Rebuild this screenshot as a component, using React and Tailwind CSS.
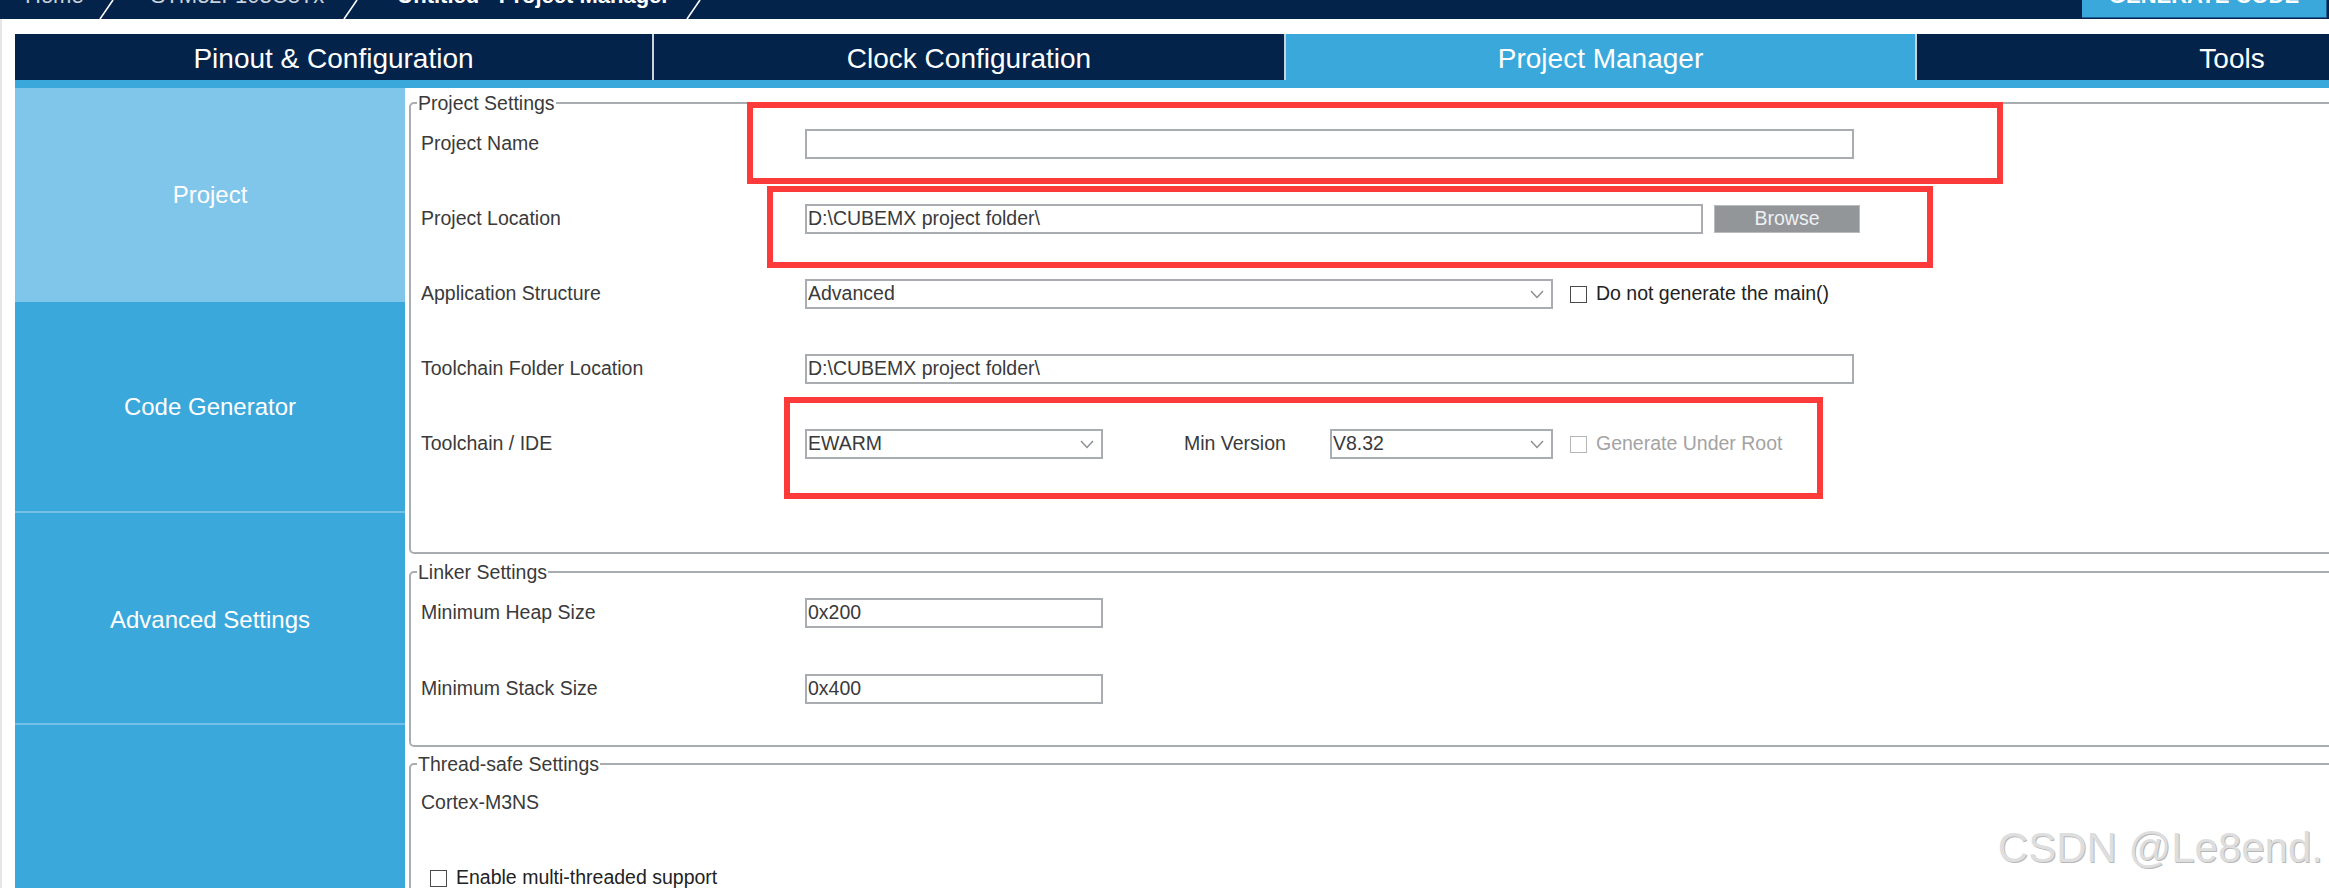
import React from 'react';

const NAVY = 'bg-[#03234b]';

function Chevron() {
  return (
    <svg width="14" height="9" viewBox="0 0 14 9" className="shrink-0">
      <polyline points="1,1 7,7.5 13,1" fill="none" stroke="#8a8d90" strokeWidth="1.4" />
    </svg>
  );
}

function Slash() {
  return (
    <svg width="15" height="19" viewBox="0 0 15 19" className="shrink-0">
      <line x1="1" y1="19" x2="14" y2="0" stroke="#ffffff" strokeWidth="1.6" />
    </svg>
  );
}

function TextBox({ value = '', className = '' }) {
  return (
    <div
      className={`h-[30px] border-2 border-[#a9adb1] bg-white flex items-center pl-[1px] text-[#3a3a3a] ${className}`}
    >
      {value}
    </div>
  );
}

function Select({ value, className = '' }) {
  return (
    <div
      className={`h-[30px] border-2 border-[#a9adb1] bg-white flex items-center justify-between pl-[1px] pr-[7px] text-[#3a3a3a] ${className}`}
    >
      <span>{value}</span>
      <Chevron />
    </div>
  );
}

function Check({ label, disabled }) {
  return (
    <div className="flex items-center">
      <div
        className={`w-[17px] h-[17px] border-[1.5px] bg-white ${
          disabled ? 'border-[#b5b5b5]' : 'border-[#4a4a4a]'
        }`}
      />
      <span className={`ml-[9px] ${disabled ? 'text-[#a3a3a3]' : 'text-[#222]'}`}>{label}</span>
    </div>
  );
}

function Row({ label, children }) {
  return (
    <div className="flex items-center h-[30px]">
      <div className="w-[384px] shrink-0 text-[#3a3a3a]">{label}</div>
      {children}
    </div>
  );
}

function Group({ title, className = '', children }) {
  return (
    <fieldset
      className={`w-[1960px] border-2 border-[#a9adb1] rounded-[5px] px-[10px] ${className}`}
    >
      <legend className="ml-[-4px] px-[1px] leading-[22px] text-[#3a3a3a]">{title}</legend>
      {children}
    </fieldset>
  );
}

export default function App() {
  const tabs = [
    { name: 'Pinout & Configuration', w: 'w-[637px]' },
    { name: 'Clock Configuration', w: 'w-[632px]' },
    { name: 'Project Manager', w: 'w-[631px]', active: true },
    { name: 'Tools', w: 'w-[632px]' },
  ];
  const side = [
    { name: 'Project', h: 'h-[214px]', active: true },
    { name: 'Code Generator', h: 'h-[209px]' },
    { name: 'Advanced Settings', h: 'h-[212px]' },
    { name: '', h: 'h-[200px]' },
  ];

  return (
    <div className="relative w-[2329px] h-[888px] overflow-hidden bg-white font-['Liberation_Sans',Arial,sans-serif] text-[19.5px]">
      {/* breadcrumb bar, text cropped at the top like the screenshot */}
      <div className={`h-[19px] ${NAVY} flex items-start overflow-hidden`}>
        <div className="flex items-start text-[22px] leading-none">
          <span className="ml-[25px] -mt-[15px] text-[#c9d1da]">Home</span>
          <span className="ml-[15px]"><Slash /></span>
          <span className="ml-[37px] -mt-[15px] text-[#c9d1da]">STM32F103C8Tx</span>
          <span className="ml-[19px]"><Slash /></span>
          <span className="ml-[39px] -mt-[15px] font-bold text-white">Untitled - Project Manager</span>
          <span className="ml-[16px]"><Slash /></span>
        </div>
        <div className="ml-auto mr-[2px] w-[245px] h-[18px] bg-[#3aa8db] border-r border-b border-[#1c5f92] overflow-hidden flex justify-center">
          <span className="-mt-[15px] text-[22px] leading-none font-bold text-white">GENERATE CODE</span>
        </div>
      </div>

      <div className="border-l-2 border-[#e4e6e8] pl-[13px]">
        {/* tabs */}
        <div className="pt-[15px] flex h-[61px] overflow-hidden">
          {tabs.map((t, i) => (
            <div
              key={t.name}
              className={`${t.w} shrink-0 h-[46px] flex items-center justify-center pt-[4px] text-[28px] text-white ${
                t.active ? 'bg-[#3aa8db]' : NAVY
              } ${i > 0 ? 'border-l-2 border-[#c9d3dd]' : ''}`}
            >
              {t.name}
            </div>
          ))}
        </div>
        <div className="h-[8px] bg-[#3aa8db]" />

        <div className="flex">
          {/* sidebar */}
          <div className="w-[390px] shrink-0 flex flex-col">
            {side.map((s, i) => (
              <div
                key={i}
                className={`${s.h} flex items-center justify-center text-[24px] text-white ${
                  s.active ? 'bg-[#7fc6ea]' : 'bg-[#3aa8db]'
                } ${i > 1 ? 'border-t-2 border-[#74c0e8]' : ''} ${i === 2 ? 'pt-[4px]' : ''}`}
              >
                {s.name}
              </div>
            ))}
          </div>

          {/* settings */}
          <div className="ml-[4px] flex flex-col">
            <Group title="Project Settings" className="mt-[4px] pt-[15px] pb-[93px]">
              <div className="flex flex-col gap-[45px]">
                <Row label="Project Name">
                  <TextBox className="w-[1049px]" />
                </Row>
                <Row label="Project Location">
                  <TextBox className="w-[898px]" value="D:\CUBEMX project folder\" />
                  <div className="ml-[11px] w-[146px] h-[28px] bg-[#939699] border border-[#b9bcbf] flex items-center justify-center text-[#eef0f2]">
                    Browse
                  </div>
                </Row>
                <Row label="Application Structure">
                  <Select className="w-[748px]" value="Advanced" />
                  <div className="ml-[17px]">
                    <Check label="Do not generate the main()" />
                  </div>
                </Row>
                <Row label="Toolchain Folder Location">
                  <TextBox className="w-[1049px]" value="D:\CUBEMX project folder\" />
                </Row>
                <Row label="Toolchain / IDE">
                  <Select className="w-[298px]" value="EWARM" />
                  <span className="ml-[81px] w-[146px] shrink-0 text-[#3a3a3a]">Min Version</span>
                  <Select className="w-[223px]" value="V8.32" />
                  <div className="ml-[17px]">
                    <Check label="Generate Under Root" disabled />
                  </div>
                </Row>
              </div>
            </Group>

            <Group title="Linker Settings" className="mt-[7px] pt-[15px] pb-[41px]">
              <div className="flex flex-col gap-[46px]">
                <Row label="Minimum Heap Size">
                  <TextBox className="w-[298px]" value="0x200" />
                </Row>
                <Row label="Minimum Stack Size">
                  <TextBox className="w-[298px]" value="0x400" />
                </Row>
              </div>
            </Group>

            <Group title="Thread-safe Settings" className="mt-[6px] pt-[13px] pb-[40px]">
              <div className="flex flex-col gap-[45px]">
                <Row label="Cortex-M3NS" />
                <div className="flex items-center h-[30px] pl-[9px]">
                  <Check label="Enable multi-threaded support" />
                </div>
              </div>
            </Group>
          </div>
        </div>
      </div>

      {/* red annotation boxes */}
      <div className="absolute left-[747px] top-[102px] w-[1256px] h-[82px] border-[6px] border-[#fc3a3a]" />
      <div className="absolute left-[767px] top-[186px] w-[1166px] h-[82px] border-[6px] border-[#fc3a3a]" />
      <div className="absolute left-[784px] top-[397px] w-[1039px] h-[102px] border-[6px] border-[#fc3a3a]" />

      {/* watermark */}
      <div className="absolute right-[6px] top-[827px] text-[42px] leading-none text-[#dedede] [text-shadow:1px_1px_0_#b8b8b8]">
        CSDN @Le8end.
      </div>
    </div>
  );
}
